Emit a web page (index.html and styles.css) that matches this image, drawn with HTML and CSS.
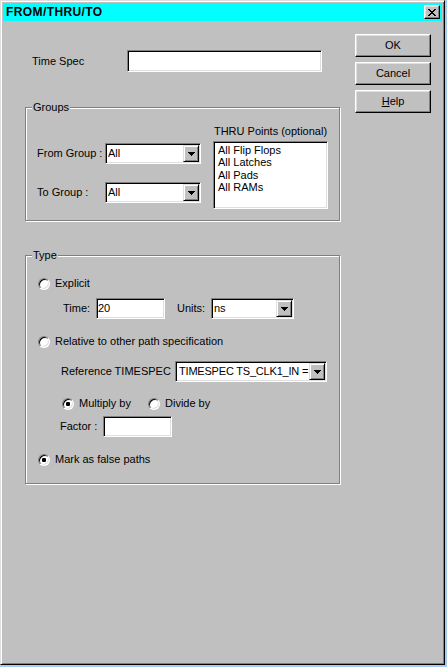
FILE: index.html
```html
<!DOCTYPE html>
<html>
<head>
<meta charset="utf-8">
<title>FROM/THRU/TO</title>
<link rel="stylesheet" href="styles.css">
</head>
<body>
<div class="window">
  <div class="titlebar">
    <span class="title">FROM/THRU/TO</span>
    <span class="close">
      <svg width="8" height="7" viewBox="0 0 8 7" shape-rendering="crispEdges"><path fill="#000" d="M0 0h2v1H0z M6 0h2v1H6z M1 1h2v1H1z M5 1h2v1H5z M2 2h4v1H2z M3 3h2v1H3z M2 4h4v1H2z M1 5h2v1H1z M5 5h2v1H5z M0 6h2v1H0z M6 6h2v1H6z"/></svg>
    </span>
  </div>
  <div class="client">
    <div class="main">
      <div class="timespec">
        <span class="lbl lbl-timespec">Time Spec</span>
        <div class="edit edit-timespec"></div>
      </div>

      <div class="group groups">
        <div class="legend">Groups</div>
        <div class="groups-body">
          <div class="groups-left">
            <div class="crow">
              <span class="lbl lbl-group">From Group :</span>
              <div class="combo combo-group">
                <span class="combo-text">All</span>
                <span class="drop"><svg width="7" height="4" viewBox="0 0 7 4" shape-rendering="crispEdges"><path fill="#000" d="M0 0h7v1H0z M1 1h5v1H1z M2 2h3v1H2z M3 3h1v1H3z"/></svg></span>
              </div>
            </div>
            <div class="crow">
              <span class="lbl lbl-group">To Group :</span>
              <div class="combo combo-group">
                <span class="combo-text">All</span>
                <span class="drop"><svg width="7" height="4" viewBox="0 0 7 4" shape-rendering="crispEdges"><path fill="#000" d="M0 0h7v1H0z M1 1h5v1H1z M2 2h3v1H2z M3 3h1v1H3z"/></svg></span>
              </div>
            </div>
          </div>
          <div class="groups-right">
            <div class="thru-label">THRU Points (optional)</div>
            <div class="listbox">
              <div class="li">All Flip Flops</div>
              <div class="li">All Latches</div>
              <div class="li">All Pads</div>
              <div class="li">All RAMs</div>
            </div>
          </div>
        </div>
      </div>

      <div class="group type">
        <div class="legend">Type</div>
        <div class="trow r-explicit">
          <span class="ritem"><span class="radio"></span><span>Explicit</span></span>
        </div>
        <div class="trow r-time">
          <span class="lbl lbl-time">Time:</span>
          <div class="edit edit-time"><span class="edit-text">20</span></div>
          <span class="lbl lbl-units">Units:</span>
          <div class="combo combo-units">
            <span class="combo-text">ns</span>
            <span class="drop"><svg width="7" height="4" viewBox="0 0 7 4" shape-rendering="crispEdges"><path fill="#000" d="M0 0h7v1H0z M1 1h5v1H1z M2 2h3v1H2z M3 3h1v1H3z"/></svg></span>
          </div>
        </div>
        <div class="trow r-relative">
          <span class="ritem"><span class="radio"></span><span>Relative to other path specification</span></span>
        </div>
        <div class="trow r-ref">
          <span class="lbl lbl-ref">Reference TIMESPEC</span>
          <div class="combo combo-ref">
            <span class="combo-text combo-text-ref">TIMESPEC TS_CLK1_IN = </span>
            <span class="drop"><svg width="7" height="4" viewBox="0 0 7 4" shape-rendering="crispEdges"><path fill="#000" d="M0 0h7v1H0z M1 1h5v1H1z M2 2h3v1H2z M3 3h1v1H3z"/></svg></span>
          </div>
        </div>
        <div class="trow r-mult">
          <span class="ritem ritem-mult"><span class="radio checked"></span><span>Multiply by</span></span>
          <span class="ritem"><span class="radio"></span><span>Divide by</span></span>
        </div>
        <div class="trow r-factor">
          <span class="lbl lbl-factor">Factor :</span>
          <div class="edit edit-factor"></div>
        </div>
        <div class="trow r-mark">
          <span class="ritem"><span class="radio checked"></span><span>Mark as false paths</span></span>
        </div>
      </div>
    </div>

    <div class="buttons">
      <div class="btn">OK</div>
      <div class="btn">Cancel</div>
      <div class="btn"><span><u>H</u>elp</span></div>
    </div>
  </div>
</div>
</body>
</html>
```
FILE: styles.css
```css
html, body {
  margin: 0;
  padding: 0;
}
body {
  background: #a6caf0;
  font-family: "Liberation Sans", Arial, sans-serif;
  font-size: 11px;
  line-height: 13px;
  color: #000;
}

.window {
  box-sizing: border-box;
  width: 445px;
  height: 665px;
  background: #c0c0c0;
  border: 1px solid;
  border-color: #dfdfdf #000 #000 #dfdfdf;
  box-shadow: inset 1px 1px 0 #fff, inset -1px -1px 0 #808080;
  padding: 2px;
}

.titlebar {
  height: 18px;
  background: #00ffff;
  display: flex;
  justify-content: space-between;
  align-items: flex-start;
}
.title {
  font-weight: bold;
  font-size: 12px;
  letter-spacing: 0.4px;
  line-height: 17px;
  padding: 1px 0 0 3px;
}
.close {
  box-sizing: border-box;
  width: 16px;
  height: 14px;
  margin: 2px 2px 0 0;
  background: #c0c0c0;
  border: 1px solid;
  border-color: #fff #000 #000 #fff;
  box-shadow: inset -1px -1px 0 #808080, inset 1px 1px 0 #dfdfdf;
  display: flex;
  align-items: center;
  justify-content: center;
}
.close svg { display: block; }

.client {
  display: flex;
  align-items: flex-start;
  padding: 13px 0 0 22px;
}
.main {
  width: 315px;
}
.buttons {
  margin-left: 15px;
  display: flex;
  flex-direction: column;
  gap: 5px;
}
.btn {
  box-sizing: border-box;
  width: 76px;
  height: 23px;
  background: #c0c0c0;
  border: 1px solid;
  border-color: #fff #000 #000 #fff;
  box-shadow: inset -1px -1px 0 #808080, inset 1px 1px 0 #dfdfdf;
  display: flex;
  align-items: center;
  justify-content: center;
}

.lbl {
  flex: none;
  white-space: nowrap;
}

/* sunken edit */
.edit, .combo, .listbox {
  box-sizing: border-box;
  background: #fff;
  border: 1px solid;
  border-color: #808080 #fff #fff #808080;
  box-shadow: inset 1px 1px 0 #000, inset -1px -1px 0 #dfdfdf;
  flex: none;
}
.edit {
  display: flex;
  align-items: center;
  padding-left: 2px;
}

.timespec {
  display: flex;
  align-items: center;
  margin-top: 16px;
}
.lbl-timespec {
  width: 95px;
  margin-left: 7px;
}
.edit-timespec {
  width: 195px;
  height: 22px;
}

/* group boxes */
.group {
  border: 1px solid #808080;
  box-shadow: 1px 1px 0 #fff, inset 1px 1px 0 #fff;
}
.legend {
  margin: -7px 0 0 6px;
  padding: 0 1px;
  width: max-content;
  background: #c0c0c0;
}
.groups {
  margin-top: 35px;
  padding-bottom: 11px;
}
.groups-body {
  display: flex;
  align-items: flex-start;
}
.groups-left {
  margin: 29px 0 0 11px;
  display: flex;
  flex-direction: column;
  gap: 18px;
}
.crow {
  display: flex;
  align-items: center;
}
.lbl-group {
  width: 68px;
}
.combo {
  display: flex;
  padding: 1px;
  height: 21px;
}
.combo-group { width: 96px; }
.combo-text {
  flex: 1;
  min-width: 0;
  padding-left: 1px;
  overflow: hidden;
  white-space: nowrap;
  align-self: center;
}
.drop {
  box-sizing: border-box;
  flex: none;
  width: 16px;
  height: 17px;
  background: #c0c0c0;
  border: 1px solid;
  border-color: #dfdfdf #000 #000 #dfdfdf;
  box-shadow: inset 1px 1px 0 #fff, inset -1px -1px 0 #808080;
  display: flex;
  align-items: center;
  justify-content: center;
}
.drop svg { display: block; }

.groups-right {
  margin-left: 12px;
  width: 115px;
}
.thru-label {
  margin-top: 11px;
  text-align: center;
  white-space: nowrap;
}
.listbox {
  margin-top: 3px;
  width: 115px;
  height: 68px;
  padding: 2px 3px 0 4px;
}
.li {
  line-height: 12.4px;
  white-space: nowrap;
}

/* type group */
.type {
  margin-top: 34px;
  padding-bottom: 17px;
}
.trow {
  display: flex;
  align-items: center;
}
.ritem {
  display: flex;
  align-items: center;
  gap: 5px;
  white-space: nowrap;
}
.radio {
  box-sizing: border-box;
  flex: none;
  width: 12px;
  height: 12px;
  border-radius: 50%;
  background: #fff;
  border: 1px solid;
  border-color: #808080 #fff #fff #808080;
  box-shadow: inset 1px 1px 0 #000, inset -1px -1px 0 #dfdfdf;
}
.radio.checked {
  background: radial-gradient(circle at 50% 50%, #000 0, #000 2px, #fff 2.4px);
}
.r-explicit { margin-top: 15px; padding-left: 12px; }
.r-time { margin-top: 8px; padding-left: 37px; }
.lbl-time { width: 33px; }
.edit-time { width: 69px; height: 21px; padding-left: 1px; }
.lbl-units { width: 34px; margin-left: 12px; }
.combo-units { width: 83px; }
.r-relative { margin-top: 16px; padding-left: 12px; }
.r-ref { margin-top: 13px; padding-left: 35px; }
.lbl-ref { width: 114px; }
.combo-ref { width: 152px; }
.combo-text-ref { padding-left: 2px; letter-spacing: -0.2px; }
.r-mult { margin-top: 15px; padding-left: 36px; }
.ritem-mult { width: 86px; }
.r-factor { margin-top: 6px; padding-left: 34px; }
.lbl-factor { width: 43px; }
.edit-factor { width: 69px; height: 21px; }
.r-mark { margin-top: 16px; padding-left: 12px; }
```
